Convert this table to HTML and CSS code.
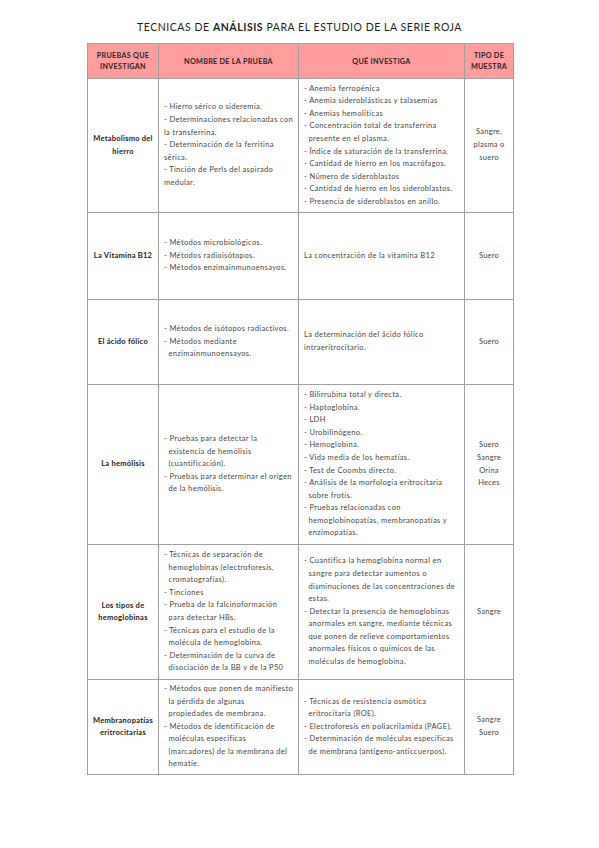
FILE: index.html
```html
<!DOCTYPE html>
<html lang="es">
<head>
<meta charset="utf-8">
<title>Técnicas de análisis para el estudio de la serie roja</title>
<link rel="stylesheet" href="styles.css">
</head>
<body>
<h1 class="title">TECNICAS DE <b>ANÁLISIS</b> PARA EL ESTUDIO DE LA SERIE ROJA</h1>
<table class="grid">
  <colgroup>
    <col class="c1"><col class="c2"><col class="c3"><col class="c4">
  </colgroup>
  <thead>
    <tr class="head">
      <th>PRUEBAS QUE<br>INVESTIGAN</th>
      <th>NOMBRE DE LA PRUEBA</th>
      <th>QUÉ INVESTIGA</th>
      <th>TIPO DE<br>MUESTRA</th>
    </tr>
  </thead>
  <tbody>
    <tr class="r1">
      <td class="label">Metabolismo del<br>hierro</td>
      <td class="list">
        <p class="flat">- Hierro sérico o sideremia.</p>
        <p class="flat">- Determinaciones relacionadas con la transferrina.</p>
        <p class="flat">- Determinación de la ferritina sérica.</p>
        <p class="flat">- Tinción de Perls del aspirado medular.</p>
      </td>
      <td class="list">
        <p>- Anemia ferropénica</p>
        <p>- Anemia sideroblásticas y talasemias</p>
        <p>- Anemias hemolíticas</p>
        <p>- Concentración total de transferrina presente en el plasma.</p>
        <p>- Índice de saturación de la transferrina.</p>
        <p>- Cantidad de hierro en los macrófagos.</p>
        <p>- Número de sideroblastos</p>
        <p>- Cantidad de hierro en los sideroblastos.</p>
        <p>- Presencia de sideroblastos en anillo.</p>
      </td>
      <td class="sample">Sangre,<br>plasma o<br>suero</td>
    </tr>
    <tr class="r2">
      <td class="label">La Vitamina B12</td>
      <td class="list">
        <p>- Métodos microbiológicos.</p>
        <p>- Métodos radioisótopos.</p>
        <p>- Métodos enzimainmunoensayos.</p>
      </td>
      <td class="list"><p class="flat">La concentración de la vitamina B12</p></td>
      <td class="sample">Suero</td>
    </tr>
    <tr class="r3">
      <td class="label">El ácido fólico</td>
      <td class="list">
        <p>- Métodos de isótopos radiactivos.</p>
        <p>- Métodos mediante enzimainmunoensayos.</p>
      </td>
      <td class="list"><p class="flat">La determinación del ácido fólico intraeritrocitario.</p></td>
      <td class="sample">Suero</td>
    </tr>
    <tr class="r4">
      <td class="label">La hemólisis</td>
      <td class="list">
        <p>- Pruebas para detectar la existencia de hemólisis (cuantificación).</p>
        <p>- Pruebas para determinar el origen de la hemólisis.</p>
      </td>
      <td class="list">
        <p>- Bilirrubina total y directa.</p>
        <p>- Haptoglobina.</p>
        <p>- LDH</p>
        <p>- Urobilinógeno.</p>
        <p>- Hemoglobina.</p>
        <p>- Vida media de los hematías.</p>
        <p>- Test de Coombs directo.</p>
        <p>- Análisis de la morfología eritrocitaria sobre frotis.</p>
        <p>- Pruebas relacionadas con hemoglobinopatías, membranopatías y enzimopatías.</p>
      </td>
      <td class="sample">Suero<br>Sangre<br>Orina<br>Heces</td>
    </tr>
    <tr class="r5">
      <td class="label">Los tipos de<br>hemoglobinas</td>
      <td class="list">
        <p>- Técnicas de separación de hemoglobinas (electroforesis, cromatografías).</p>
        <p>- Tinciones</p>
        <p>- Prueba de la falcinoformación para detectar HBs.</p>
        <p>- Técnicas para el estudio de la molécula de hemoglobina.</p>
        <p>- Determinación de la curva de disociación de la BB y de la P50</p>
      </td>
      <td class="list">
        <p>- Cuantifica la hemoglobina normal en sangre para detectar aumentos o disminuciones de las concentraciones de estas.</p>
        <p>- Detectar la presencia de hemoglobinas anormales en sangre, mediante técnicas que ponen de relieve comportamientos anormales físicos o químicos de las moléculas de hemoglobina.</p>
      </td>
      <td class="sample">Sangre</td>
    </tr>
    <tr class="r6">
      <td class="label">Membranopatías<br>eritrocitarias</td>
      <td class="list">
        <p>- Métodos que ponen de manifiesto la pérdida de algunas<br>propiedades de membrana.</p>
        <p>- Métodos de identificación de moléculas específicas<br>(marcadores) de la membrana del hematíe.</p>
      </td>
      <td class="list">
        <p>- Técnicas de resistencia osmótica eritrocitaria (ROE).</p>
        <p>- Electroforesis en poliacrilamida (PAGE).</p>
        <p>- Determinación de moléculas específicas de membrana (antígeno-anticcuerpos).</p>
      </td>
      <td class="sample">Sangre<br>Suero</td>
    </tr>
  </tbody>
</table>
</body>
</html>
```

FILE: styles.css
```css
html, body {
  margin: 0;
  padding: 0;
  background: #ffffff;
}
body {
  font-family: Lato, "Open Sans", "DejaVu Sans", sans-serif;
  color: #474747;
  width: 599px;
}
.title {
  margin: 0;
  padding-top: 20px;
  height: 23px;
  line-height: 14px;
  text-align: center;
  font-size: 10.5px;
  font-weight: 400;
  letter-spacing: 0.55px;
  color: #1e1e1e;
}
.title b {
  font-weight: 700;
}
.grid {
  margin-left: 87px;
  width: 426px;
  border-collapse: collapse;
  table-layout: fixed;
}
.c1 { width: 71px; }
.c2 { width: 140px; }
.c3 { width: 166px; }
.c4 { width: 49px; }
.grid th,
.grid td {
  border: 1px solid #a0a0a0;
  vertical-align: middle;
  padding: 0;
}
.head th {
  background: #ff9d9d;
  height: 34px;
  font-size: 7.2px;
  font-weight: 700;
  letter-spacing: 0.3px;
  line-height: 11px;
  color: #262626;
  text-align: center;
}
.r1 td { height: 133px; }
.r2 td { height: 86px; }
.r3 td { height: 84px; }
.r4 td { height: 159px; }
.r5 td { height: 134px; }
.r6 td { height: 94px; }
.label {
  font-size: 7.5px;
  font-weight: 700;
  letter-spacing: 0.25px;
  line-height: 12.5px;
  color: #222;
  text-align: center;
}
.list {
  font-size: 7.5px;
  letter-spacing: 0.35px;
  line-height: 12.6px;
  padding: 0 3px 0 5px !important;
}
.list p {
  margin: 0;
  padding-left: 4.5px;
  text-indent: -4.5px;
}
.list p.flat {
  padding-left: 0;
  text-indent: 0;
}
.sample {
  font-size: 7.5px;
  letter-spacing: 0.25px;
  line-height: 12.8px;
  text-align: center;
}
```
